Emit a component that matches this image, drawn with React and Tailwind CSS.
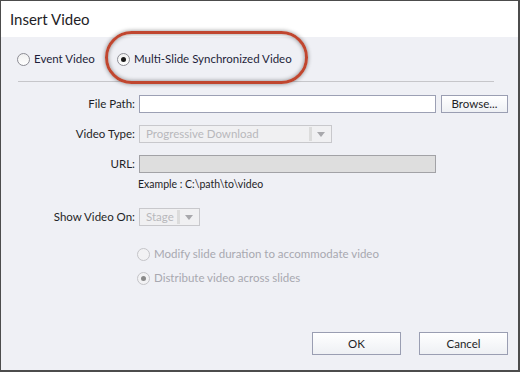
import React from 'react';

const Radio = ({ checked, disabled }) => (
  <span
    className={`relative flex items-center justify-center w-[13px] h-[13px] rounded-full border shrink-0 ${
      disabled ? 'border-[#c4c4c8] bg-[#f2f2f4]' : 'border-[#8c8c94] bg-gradient-to-b from-[#f0f0f0] to-white'
    }`}
  >
    {checked && (
      <span className={`w-[5px] h-[5px] rounded-full ${disabled ? 'bg-[#8a8a8a]' : 'bg-[#1a1a1a]'}`} />
    )}
  </span>
);

const DisabledSelect = ({ label, width }) => (
  <div className={`flex items-center h-[18px] border border-[#c8c8cc] bg-[#f0f0f2] ${width}`}>
    <span className="flex-1 pl-[6px] text-[#b8b8bc] whitespace-nowrap">{label}</span>
    <span className="w-[3px] h-[14px] bg-[#dcdcdc] mr-[5px] shrink-0" />
    <svg width="8" height="5" viewBox="0 0 8 5" className="mr-[6px] shrink-0">
      <polygon points="0,0 8,0 4,5" fill="#a8a8ac" />
    </svg>
  </div>
);

const Label = ({ children }) => (
  <span className="w-[134px] text-right text-[#1e1e26] shrink-0">{children}</span>
);

const Button = ({ children, className = '' }) => (
  <button
    className={`border border-[#9a9eb2] bg-gradient-to-b from-white to-[#eef0f4] text-[#1e1e26] ${className}`}
  >
    {children}
  </button>
);

export default function App() {
  return (
    <div
      className="w-[520px] h-[372px] border-t border-l border-r-2 border-b-2 border-[#4c4c4c] flex flex-col text-[11.5px] leading-none"
      style={{ fontFamily: 'Lato, "Open Sans", sans-serif' }}
    >
      <div className="h-[36px] bg-white flex items-center pl-[9px] text-[15px] text-[#1e1e26] shrink-0">
        Insert Video
      </div>

      <div className="flex-1 bg-[#eff0f5] relative flex flex-col">
        {/* highlight ellipse */}
        <div className="absolute left-[104px] top-[-6px] w-[203px] h-[53px] rounded-full border-[3px] border-[#c0462f] shadow-[0_0_4px_rgba(0,0,0,0.45),inset_0_0_4px_rgba(0,0,0,0.45)]" />

        <div className="flex items-center h-[18px] mt-[13px] pl-[16px]">
          <div className="flex items-center gap-[4px] w-[100px]">
            <Radio />
            <span className="text-[#1e1e3a]">Event Video</span>
          </div>
          <div className="flex items-center gap-[4px]">
            <Radio checked />
            <span className="text-[#1e1e3a]">Multi-Slide Synchronized Video</span>
          </div>
        </div>

        <div className="ml-[17px] w-[476px] mt-[13px] border-t border-[#c6c6ca]" />

        <div className="flex items-center h-[18px] mt-[13px]">
          <Label>File Path:</Label>
          <div className="ml-[4px] w-[297px] h-[18px] border border-[#9ca0b4] bg-white" />
          <Button className="ml-[5px] w-[67px] h-[18px]">Browse...</Button>
        </div>

        <div className="flex items-center h-[18px] mt-[12px]">
          <Label>Video Type:</Label>
          <div className="ml-[4px]">
            <DisabledSelect label="Progressive Download" width="w-[193px]" />
          </div>
        </div>

        <div className="flex items-center h-[18px] mt-[12px]">
          <Label>URL:</Label>
          <div className="ml-[4px] w-[297px] h-[18px] border border-[#a2a2a6] bg-[#dedede]" />
        </div>

        <div className="ml-[137px] mt-[4px] h-[14px] flex items-center text-[10.5px] text-[#1e1e26]">
          Example : C:\path\to\video
        </div>

        <div className="flex items-center h-[18px] mt-[17px]">
          <Label>Show Video On:</Label>
          <div className="ml-[4px]">
            <DisabledSelect label="Stage" width="w-[61px]" />
          </div>
        </div>

        <div className="flex items-center gap-[4px] h-[16px] mt-[20px] ml-[136px] text-[#a8a8b0]">
          <Radio disabled />
          <span>Modify slide duration to accommodate video</span>
        </div>

        <div className="flex items-center gap-[4px] h-[16px] mt-[8px] ml-[136px] text-[#a8a8b0]">
          <Radio checked disabled />
          <span>Distribute video across slides</span>
        </div>

        <div className="flex justify-end gap-[18px] pr-[10px] mt-[46px]">
          <Button className="w-[89px] h-[23px]">OK</Button>
          <Button className="w-[89px] h-[23px]">Cancel</Button>
        </div>
      </div>
    </div>
  );
}
